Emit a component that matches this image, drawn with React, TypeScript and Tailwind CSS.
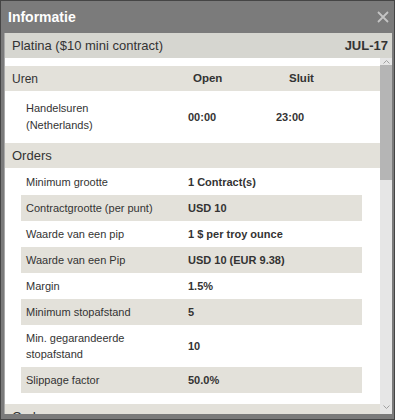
import React from "react";

type Row = { label: string; value: string; tall?: boolean };

const ORDERS: Row[] = [
  { label: "Minimum grootte", value: "1 Contract(s)" },
  { label: "Contractgrootte (per punt)", value: "USD 10" },
  { label: "Waarde van een pip", value: "1 $ per troy ounce" },
  { label: "Waarde van een Pip", value: "USD 10 (EUR 9.38)" },
  { label: "Margin", value: "1.5%" },
  { label: "Minimum stopafstand", value: "5" },
  { label: "Min. gegarandeerde stopafstand", value: "10", tall: true },
  { label: "Slippage factor", value: "50.0%" },
];

function SectionHeader({ children }: { children: React.ReactNode }) {
  return (
    <div className="h-[25px] shrink-0 bg-[#e3e1da] pl-[7px] flex items-center text-[13px] text-[#333]">
      {children}
    </div>
  );
}

export default function App() {
  return (
    <div
      className="w-[395px] h-[420px] bg-[#7b7b7b] border border-[#454545] flex flex-col overflow-hidden"
      style={{ fontFamily: '"Liberation Sans", Arial, sans-serif' }}
    >
      {/* Title bar */}
      <div className="h-[32px] shrink-0 flex items-center justify-between pl-[7px] pr-[4px]">
        <span className="text-[14px] font-bold text-white">Informatie</span>
        <svg width="12" height="12" viewBox="0 0 12 12" className="mr-[1px]">
          <path d="M1 1L11 11M11 1L1 11" stroke="#c4c4c4" strokeWidth="1.8" />
        </svg>
      </div>

      {/* Panel */}
      <div className="flex-1 min-h-0 ml-[3px] mr-[2px] mb-[5px] bg-white border-l border-[#a9a9a9] flex flex-col">
        <div className="h-[25px] shrink-0 bg-[#d6d6d0] flex items-center justify-between pl-[7px] pr-[4px] text-[13px] text-[#333]">
          <span>Platina ($10 mini contract)</span>
          <span className="font-bold">JUL-17</span>
        </div>

        <div className="flex-1 min-h-0 flex">
          {/* Content */}
          <div className="flex-1 min-w-0 overflow-hidden pt-[8px] text-[11px] text-[#333]">
            <div className="h-[25px] bg-[#e3e1da] flex items-center text-[#333]">
              <span className="w-[188px] pl-[7px] text-[12px]">Uren</span>
              <span className="w-[96px] font-bold text-[11.5px]">Open</span>
              <span className="font-bold text-[11.5px]">Sluit</span>
            </div>
            <div className="h-[52px] ml-[16px] flex items-center">
              <span className="w-[167px] pl-[5px] leading-[17px]">
                Handelsuren
                <br />
                (Netherlands)
              </span>
              <span className="w-[88px] font-bold">00:00</span>
              <span className="font-bold">23:00</span>
            </div>

            <SectionHeader>Orders</SectionHeader>
            <div className="ml-[16px] mr-[18px] pt-[1px] pb-[11px]">
              {ORDERS.map((r, i) => (
                <div
                  key={r.label}
                  className={`flex items-center leading-[16px] ${r.tall ? "h-[42px]" : "h-[26px]"} ${i % 2 === 1 ? "bg-[#e3e1da]" : "bg-white"}`}
                >
                  <span className="w-[167px] pl-[5px] pr-[6px]">{r.label}</span>
                  <span className="font-bold">{r.value}</span>
                </div>
              ))}
            </div>

            <SectionHeader>Codes</SectionHeader>
          </div>

          {/* Scrollbar */}
          <div className="w-[12px] shrink-0 bg-[#e6e6e6] flex flex-col">
            <div className="h-[7px] flex items-center justify-center">
              <svg width="7" height="4" viewBox="0 0 7 4">
                <path d="M0.5 3.5L3.5 0.5L6.5 3.5" stroke="#a0a0a0" fill="none" />
              </svg>
            </div>
            <div className="h-[115px] bg-[#b5b5b5]" />
            <div className="flex-1" />
            <div className="h-[14px] flex items-center justify-center">
              <svg width="7" height="4" viewBox="0 0 7 4">
                <path d="M0.5 0.5L3.5 3.5L6.5 0.5" stroke="#a0a0a0" fill="none" />
              </svg>
            </div>
          </div>
        </div>
      </div>
    </div>
  );
}
